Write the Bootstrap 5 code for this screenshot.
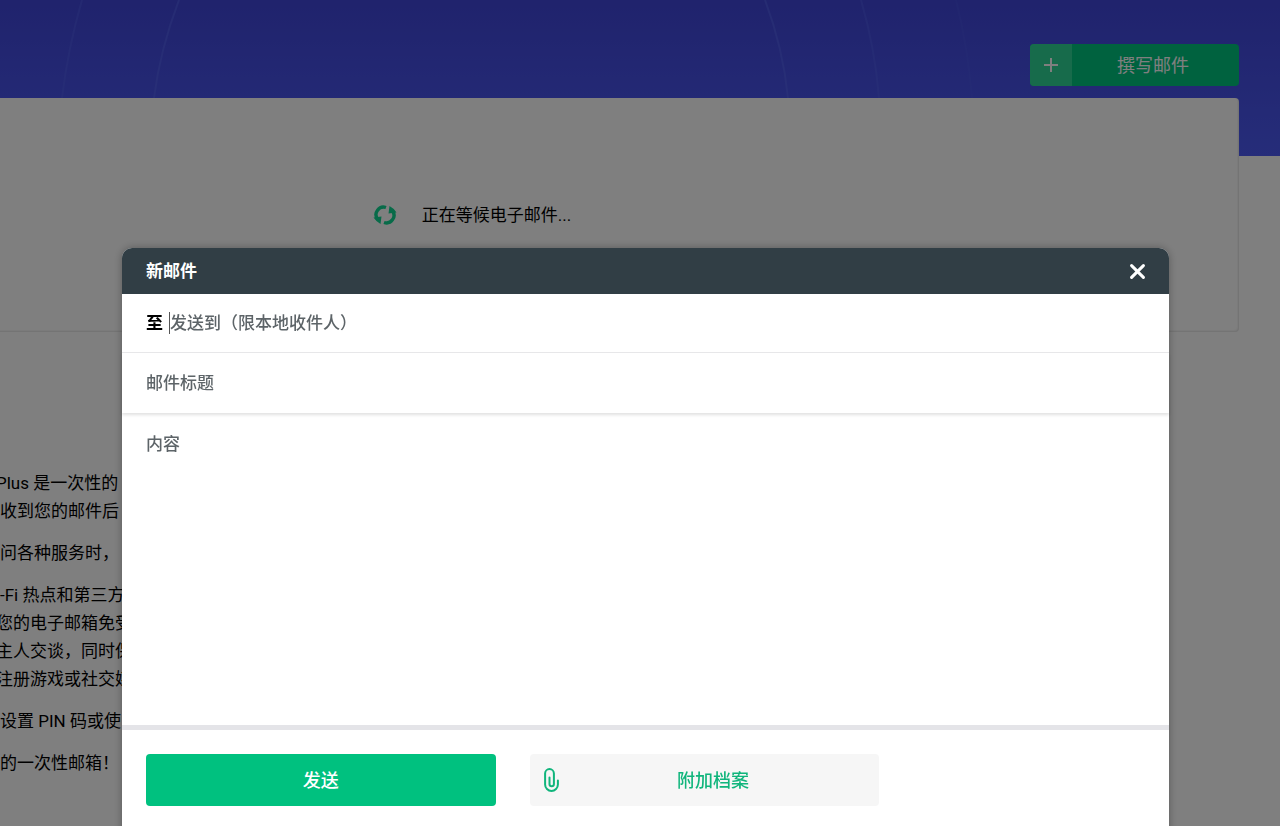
<!DOCTYPE html>
<html lang="zh-CN">
<head>
<meta charset="utf-8">
<meta name="viewport" content="width=device-width, initial-scale=1">
<title>新邮件</title>
<link href="https://cdn.jsdelivr.net/npm/bootstrap@5.3.0/dist/css/bootstrap.min.css" rel="stylesheet">
<style>
  body { font-family: Roboto, "Noto Sans CJK SC", sans-serif; font-size: 17px; line-height: 28px; color: #000; background: #fff; }
  .page { min-height: 100vh; background: linear-gradient(#4046da, #4c5af4) no-repeat 0 0 / 100% 156px; }
  .arcs { top: 0; left: 0; height: 98px; }
  .topbar { padding: 44px 41px 12px 0; }
  .btn-compose { width: 209px; height: 42px; font-size: 18px; background: #00c47f; border-radius: 4px; }
  .btn-compose .plus { width: 42px; background: #2ed696; }
  .btn-compose .caption { padding-right: 5px; }
  .inbox { height: 234px; margin-left: -295px; margin-right: 41px; border-radius: 0 4px 4px 0; box-shadow: inset -1px -1px 2px rgba(0,0,0,.12); gap: 25px; }
  .article { padding-top: 137px; }
  .article p { margin-bottom: 14px; }
  .cut { margin-left: -4px; }
  .compose-dialog { max-width: none; margin: 248px 111px 0 122px; }
  .compose { border-radius: 10px 10px 0 0; box-shadow: 0 0 8px rgba(0,0,0,.3); font-weight: 500; }
  .compose-head { height: 46px; padding: 0 24px; background: #313e45; border-radius: 10px 10px 0 0; }
  .compose-head h1 { font-size: 17px; font-weight: 700; }
  .field-row { height: 59px; padding: 0 24px; border-bottom: 1px solid #e8e8ea; }
  .field-row label { padding-right: 6px; }
  .subject-row { height: 60px; border-bottom: 0; box-shadow: 0 2px 3px rgba(0,0,0,.12); }
  .plain { border: 0; outline: 0; padding: 0; color: #222; font-weight: 500; background: transparent; }
  .plain::placeholder { color: #5d6468; opacity: 1; }
  .focused { height: 22px; border-left: 1px solid #555; }
  .message { height: 312px; padding: 17px 24px; resize: none; }
  .compose-foot { border-top: 5px solid #e4e4e8; padding: 24px 24px 32px; gap: 34px; }
  .compose-foot .btn { width: 35%; height: 52px; font-size: 18px; font-weight: 500; border: 0; border-radius: 4px; }
  .btn-send { background: #00c17f; }
  .compose-foot .btn-attach { background: #f6f6f6; color: #10b57c; padding-left: 14px; }
</style>
</head>
<body class="overflow-hidden">
<div class="page position-relative overflow-hidden">
  <svg class="arcs position-absolute w-100" fill="none" stroke="#5a6af4" stroke-opacity=".5" stroke-width="2" aria-hidden="true">
    <path d="M179 0Q160 50 154 98M765 0Q783 48 788 98"/>
    <path d="M82 0Q68 48 62 98M861 0Q875 48 879 98" stroke-opacity=".35"/>
    <path d="M956 0Q968 48 972 98" stroke-opacity=".15"/>
  </svg>
  <header class="topbar d-flex justify-content-end position-relative">
    <button type="button" class="btn btn-compose border-0 p-0 d-flex align-items-stretch text-white overflow-hidden">
      <span class="plus d-flex align-items-center justify-content-center">
        <svg width="14" height="14" viewBox="0 0 14 14" stroke="currentColor" stroke-width="2" aria-hidden="true"><path d="M7 0V14M0 7H14"/></svg>
      </span>
      <span class="caption flex-fill d-flex align-items-center justify-content-center">撰写邮件</span>
    </button>
  </header>
  <section class="inbox bg-white position-relative d-flex align-items-center justify-content-center">
    <svg width="24" height="20" viewBox="0 0 24 20" fill="none" aria-hidden="true">
      <path d="M4.500 14A7.500 7.500 0 0 1 13 2.500M19.500 6A7.500 7.500 0 0 1 11 17.500" stroke="#10d792" stroke-width="3.400"/>
      <path d="M.5 12.500L8.500 11.500L7.500 19Q3.500 17 .5 12.500ZM23.500 7.500L15.500 8.500L16.500 1Q20.500 3 23.500 7.500Z" fill="#10d792"/>
    </svg>
    <span>正在等候电子邮件...</span>
  </section>
  <article class="article text-nowrap">
    <p><span class="cut">Plus 是一次性的</span><br>收到您的邮件后</p>
    <p>问各种服务时，</p>
    <p>-Fi 热点和第三方<br><span class="cut">您的电子邮箱免受</span><br><span class="cut">主人交谈，同时保</span><br><span class="cut">注册游戏或社交媒</span></p>
    <p>设置 PIN 码或使</p>
    <p>的一次性邮箱！</p>
  </article>
</div>

<div class="modal-backdrop show"></div>
<div class="modal show d-block overflow-hidden" role="dialog" aria-labelledby="composeTitle">
  <div class="modal-dialog compose-dialog">
    <form class="modal-content compose border-0">
      <div class="compose-head d-flex align-items-center justify-content-between text-white">
        <h1 class="m-0" id="composeTitle">新邮件</h1>
        <button type="button" class="btn border-0 p-0 text-white d-flex" aria-label="关闭">
          <svg width="15" height="15" viewBox="0 0 14 14" stroke="currentColor" stroke-width="2.800" stroke-linecap="round" aria-hidden="true"><path d="M1.500 1.500L12.500 12.500M12.500 1.500L1.500 12.500"/></svg>
        </button>
      </div>
      <div class="field-row d-flex align-items-center">
        <label for="to" class="fw-bold">至</label>
        <input id="to" type="text" class="plain focused flex-fill" placeholder="发送到（限本地收件人）">
      </div>
      <div class="field-row subject-row d-flex align-items-center">
        <input type="text" class="plain flex-fill" placeholder="邮件标题" aria-label="邮件标题">
      </div>
      <textarea class="plain message w-100" placeholder="内容" aria-label="内容"></textarea>
      <div class="compose-foot d-flex">
        <button type="button" class="btn btn-send text-white">发送</button>
        <button type="button" class="btn btn-attach d-flex align-items-center">
          <svg width="15" height="24" viewBox="0 0 15 24" fill="none" stroke="currentColor" stroke-width="2" stroke-linecap="round" aria-hidden="true"><path d="M5.500 9.500V16A2.200 2.200 0 0 0 9.900 16V5.500A4.400 4.400 0 0 0 1.100 5.500V16.500A6.400 6.400 0 0 0 13.900 16.500V12.500"/></svg>
          <span class="flex-fill text-center">附加档案</span>
        </button>
      </div>
    </form>
  </div>
</div>
<script src="https://cdn.jsdelivr.net/npm/bootstrap@5.3.0/dist/js/bootstrap.bundle.min.js"></script>
</body>
</html>
